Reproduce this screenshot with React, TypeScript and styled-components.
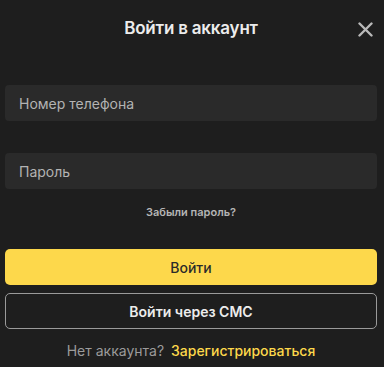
import React from 'react';
import styled, { createGlobalStyle } from 'styled-components';

const GlobalStyle = createGlobalStyle`
    html, body {
        margin: 0;
        padding: 0;
        background: #1e1e1e;
    }
    * {
        box-sizing: border-box;
    }
`;

export default function App() {
    return (
        <>
            <GlobalStyle />
            <Modal>
                <Header>
                    <Title>Войти в аккаунт</Title>
                    <CloseButton aria-label='Закрыть'>
                        <svg width='15' height='15' viewBox='0 0 15 15'>
                            <path d='M1.5 1.5 L13.5 13.5 M13.5 1.5 L1.5 13.5' stroke='#b9b9b9' strokeWidth='2.4' strokeLinecap='round' />
                        </svg>
                    </CloseButton>
                </Header>
                <Form>
                    <Field placeholder='Номер телефона' />
                    <Field placeholder='Пароль' type='password' $top={32} />
                    <Forgot>Забыли пароль?</Forgot>
                    <PrimaryButton>Войти</PrimaryButton>
                    <OutlineButton>Войти через СМС</OutlineButton>
                    <Footer>
                        Нет аккаунта? <Link>Зарегистрироваться</Link>
                    </Footer>
                </Form>
            </Modal>
        </>
    );
}

const Modal = styled.div`
    width: 384px;
    height: 367px;
    background: #1e1e1e;
    padding: 0 7px 0 5px;
    font-family: Inter, 'Noto Sans', sans-serif;
    display: flex;
    flex-direction: column;
`;

const Header = styled.div`
    position: relative;
    height: 56px;
    display: flex;
    align-items: center;
    justify-content: center;
`;

const Title = styled.div`
    color: #ececec;
    font-size: 17px;
    font-weight: 600;
    letter-spacing: -0.2px;
`;

const CloseButton = styled.button`
    position: absolute;
    right: 3px;
    top: 21px;
    width: 17px;
    height: 17px;
    padding: 0;
    border: none;
    background: none;
    display: flex;
    align-items: center;
    justify-content: center;
`;

const Form = styled.div`
    display: flex;
    flex-direction: column;
    padding-top: 29px;
`;

const Field = styled.input<{ $top?: number }>`
    height: 36px;
    margin-top: ${(p) => p.$top || 0}px;
    border: none;
    border-radius: 4px;
    background: #2a2a2a;
    padding: 0 14px;
    font-family: inherit;
    font-size: 14px;
    color: #bdbdbd;
    outline: none;

    &::placeholder {
        color: #b3b3b3;
    }
`;

const Forgot = styled.div`
    margin-top: 16px;
    text-align: center;
    color: #b5b5b5;
    font-size: 11px;
    font-weight: 600;
`;

const PrimaryButton = styled.button`
    margin-top: 30px;
    height: 36px;
    border: none;
    border-radius: 5px;
    background: #fdd84b;
    color: #2a2a2a;
    font-family: inherit;
    font-size: 14px;
    font-weight: 500;
`;

const OutlineButton = styled.button`
    margin-top: 8px;
    height: 36px;
    border: 1px solid #9a9a9a;
    border-radius: 5px;
    background: transparent;
    color: #ececec;
    font-family: inherit;
    font-size: 14px;
    font-weight: 600;
`;

const Footer = styled.div`
    margin-top: 13px;
    text-align: center;
    color: #9b9b9b;
    font-size: 14px;
`;

const Link = styled.span`
    color: #fdd84b;
    font-weight: 500;
    margin-left: 3px;
`;
